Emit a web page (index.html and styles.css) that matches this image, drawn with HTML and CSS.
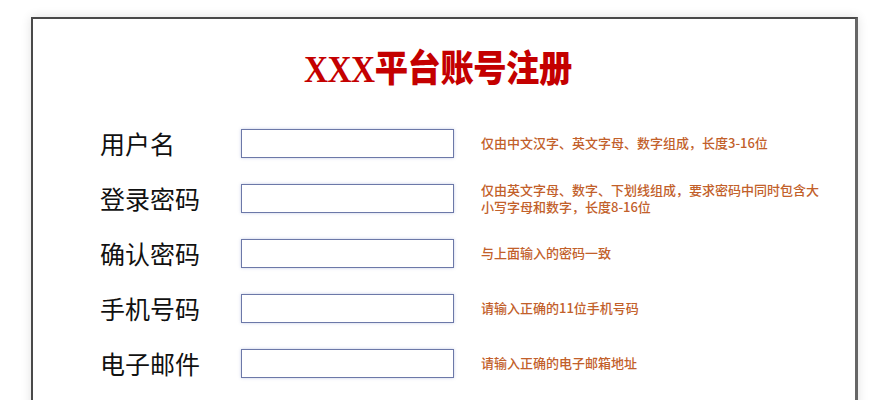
FILE: index.html
```html
<!DOCTYPE html>
<html lang="zh-CN">
<head>
<meta charset="utf-8">
<title>XXX平台账号注册</title>
<link rel="stylesheet" href="styles.css">
</head>
<body>
<div class="panel">
  <h1 class="title"><span class="title-text">XXX平台账号注册</span></h1>
  <div class="form">
    <div class="row">
      <label class="label">用户名</label>
      <input class="field" type="text">
      <span class="hint">仅由中文汉字、英文字母、数字组成，长度3-16位</span>
    </div>
    <div class="row">
      <label class="label">登录密码</label>
      <input class="field" type="password">
      <span class="hint">仅由英文字母、数字、下划线组成，要求密码中同时包含大小写字母和数字，长度8-16位</span>
    </div>
    <div class="row">
      <label class="label">确认密码</label>
      <input class="field" type="password">
      <span class="hint">与上面输入的密码一致</span>
    </div>
    <div class="row">
      <label class="label">手机号码</label>
      <input class="field" type="text">
      <span class="hint">请输入正确的11位手机号码</span>
    </div>
    <div class="row">
      <label class="label">电子邮件</label>
      <input class="field" type="text">
      <span class="hint">请输入正确的电子邮箱地址</span>
    </div>
  </div>
</div>
</body>
</html>
```
FILE: styles.css
```css
html, body {
  margin: 0;
  padding: 0;
  background: #ffffff;
}
body {
  padding: 17px 0 0 31px;
  font-family: "Noto Sans CJK SC", "Noto Sans", sans-serif;
}
.panel {
  width: 822px;
  height: 420px;
  border: 2px solid #4a4a4a;
  border-right: 3px solid #666;
  background: #fff;
  box-shadow: 0 0 10px rgba(0, 0, 0, 0.12);
}
.title {
  margin: 0;
  padding-top: 31px;
  padding-right: 12px;
  height: 40px;
  line-height: 40px;
  text-align: center;
  font-family: "Liberation Serif", "Noto Sans CJK SC", serif;
  font-size: 37px;
  font-weight: 900;
  color: #c40000;
}
.title-text {
  display: inline-block;
  transform: scaleX(0.9);
  letter-spacing: -0.5px;
}
.form {
  padding-top: 26px;
  padding-left: 67px;
}
.row {
  display: flex;
  align-items: center;
  height: 55px;
}
.label {
  width: 141px;
  font-size: 25px;
  line-height: 30px;
  color: #111;
  position: relative;
  top: -1px;
}
.field {
  box-sizing: border-box;
  width: 213px;
  height: 29px;
  margin: 0;
  padding: 0 4px;
  border: 1px solid #6c78a8;
  background: #fff;
  box-shadow: 0 0 3px rgba(110, 130, 190, 0.4);
  outline: none;
}
.hint {
  margin-left: 27px;
  width: 340px;
  font-size: 13px;
  line-height: 17px;
  font-weight: 500;
  color: #c2602a;
  position: relative;
  top: -1px;
}
```
